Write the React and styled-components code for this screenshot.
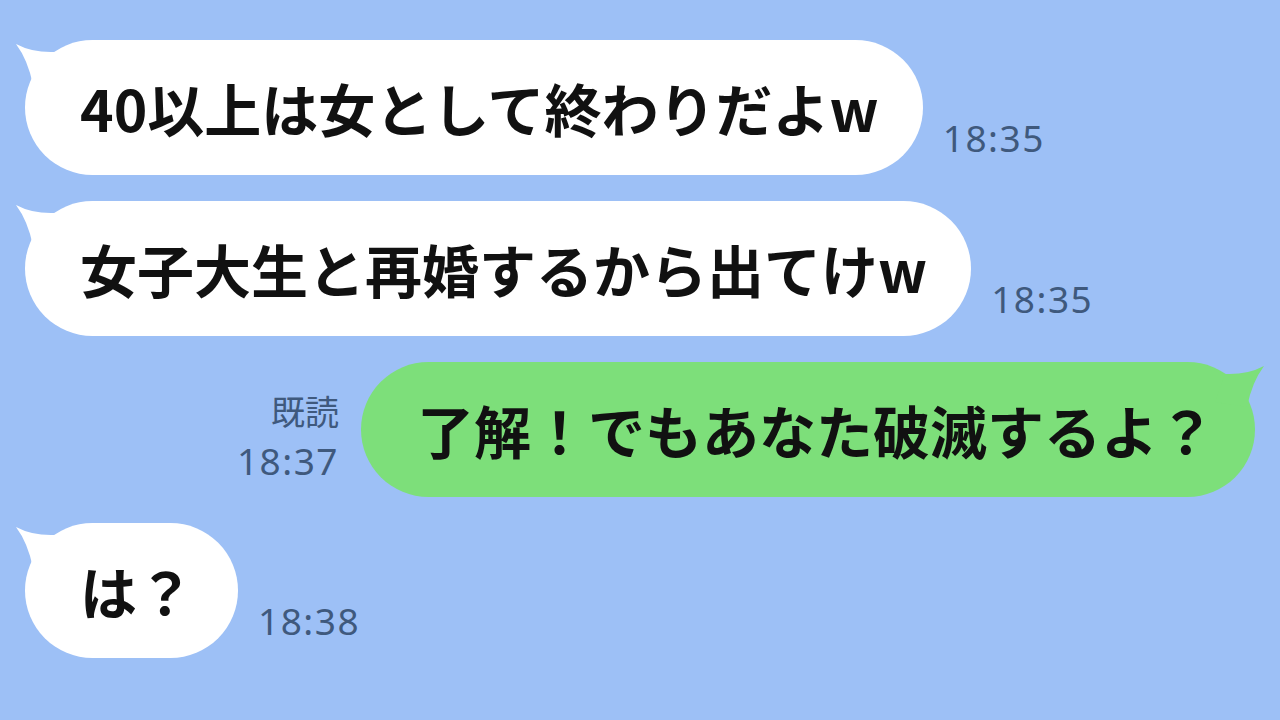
import React from 'react'
import styled, { createGlobalStyle } from 'styled-components'

const GlobalStyle = createGlobalStyle`
  html, body {
    margin: 0;
    padding: 0;
    background: #9dc0f6;
  }
  body {
    font-family: 'Noto Sans CJK JP', 'Noto Sans', sans-serif;
  }
`

const Chat = styled.div`
  width: 1280px;
  height: 720px;
  box-sizing: border-box;
  padding: 40px 25px 0 25px;
  display: flex;
  flex-direction: column;
  gap: 26px;
  background: #9dc0f6;
  overflow: hidden;
`

const Row = styled.div`
  display: flex;
  align-items: flex-end;
  justify-content: ${({ mine }) => (mine ? 'flex-end' : 'flex-start')};
  gap: ${({ mine }) => (mine ? '22px' : '20px')};
`

const Bubble = styled.div`
  position: relative;
  height: 135px;
  box-sizing: border-box;
  padding: ${({ mine }) => (mine ? '0 40px 0 56px' : '0 44px 0 55px')};
  border-radius: 68px;
  background: ${({ mine }) => (mine ? '#7ddf7a' : '#ffffff')};
  display: flex;
  align-items: center;
  color: #111;
  font-family: 'Noto Sans CJK JP', sans-serif;
  font-weight: 700;
  font-size: 57px;
  line-height: 1;
  white-space: nowrap;
`

const Tail = styled.svg`
  position: absolute;
  top: 0;
  ${({ mine }) => (mine ? 'right: -10px; transform: scaleX(-1);' : 'left: -10px;')}
  width: 60px;
  height: 60px;
  overflow: visible;
`

const Meta = styled.div`
  display: flex;
  flex-direction: column;
  align-items: flex-end;
  margin-bottom: ${({ mine }) => (mine ? '11px' : '12px')};
  color: #3f597d;
  font-family: 'Noto Sans', 'Noto Sans CJK JP', sans-serif;
`

const Read = styled.span`
  font-family: 'Noto Sans CJK JP', sans-serif;
  font-size: 34px;
  line-height: normal;
`

const Time = styled.span`
  font-size: 37px;
  line-height: normal;
  letter-spacing: 1.5px;
`

const messages = [
  { text: '40以上は女として終わりだよw', time: '18:35' },
  { text: '女子大生と再婚するから出てけw', time: '18:35' },
  { text: '了解！でもあなた破滅するよ？', time: '18:37', mine: true, read: true },
  { text: 'は？', time: '18:38' },
]

const BubbleTail = ({ mine }) => (
  <Tail mine={mine} viewBox="0 0 60 60">
    <path
      d="M1 4 Q18 13 40 12 L50 40 L18 45 Q13 20 1 4 Z"
      fill={mine ? '#7ddf7a' : '#ffffff'}
    />
  </Tail>
)

export default function App() {
  return (
    <>
      <GlobalStyle />
      <Chat>
        {messages.map((m, i) => (
          <Row key={i} mine={m.mine}>
            {m.mine && (
              <Meta mine>
                {m.read && <Read>既読</Read>}
                <Time>{m.time}</Time>
              </Meta>
            )}
            <Bubble mine={m.mine}>
              <BubbleTail mine={m.mine} />
              {m.text}
            </Bubble>
            {!m.mine && (
              <Meta>
                <Time>{m.time}</Time>
              </Meta>
            )}
          </Row>
        ))}
      </Chat>
    </>
  )
}
